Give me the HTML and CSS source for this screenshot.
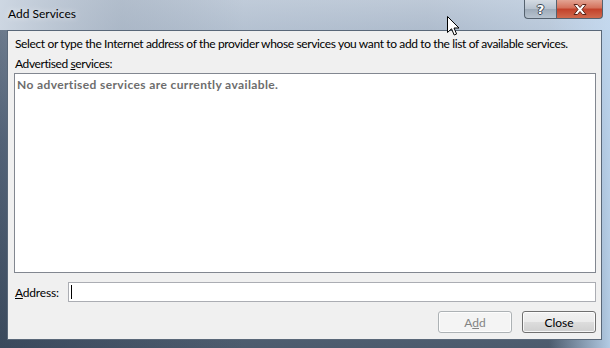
FILE: index.html
```html
<!DOCTYPE html>
<html lang="en">
<head>
    <meta charset="UTF-8">
    <title>Add Services</title>
    <link rel="stylesheet" href="styles.css">
</head>
<body>
    <div class="window">
        <div class="titlebar">
            <span class="title">Add Services</span>
            <div class="caption-buttons">
                <span class="caption-help">?</span>
                <span class="caption-close">
                    <svg width="14" height="11" viewBox="0 0 14 11">
                        <path d="M1 0.5 H4.5 L7 3.5 L9.5 0.5 H13 L9 5.5 L13 10.5 H9.5 L7 7.5 L4.5 10.5 H1 L5 5.5 Z" fill="#fff" stroke="#5a2418" stroke-width="1"/>
                    </svg>
                </span>
            </div>
        </div>
        <div class="client">
            <p class="intro">Select or type the Internet address of the provider whose services you want to add to the list of available services.</p>
            <div class="field-label">Advertised <u>s</u>ervices:</div>
            <div class="service-list">
                <div class="empty">No advertised services are currently available.</div>
            </div>
            <div class="address-row">
                <span class="address-label"><u>A</u>ddress:</span>
                <div class="address-input"><span class="caret"></span></div>
            </div>
            <div class="button-row">
                <button class="btn" disabled>A<u>d</u>d</button>
                <button class="btn">Close</button>
            </div>
        </div>
        <svg class="pointer" width="13" height="20" viewBox="0 0 13 20">
            <path d="M0.5 0.5 V16.5 L4.5 12.8 L7.2 19 L9.6 18 L7 12 H12 Z" fill="#fff" stroke="#000" stroke-width="1" stroke-linejoin="round"/>
        </svg>
    </div>
</body>
</html>
```

FILE: styles.css
```css
body {
    margin: 0;
    font-family: Lato, "Noto Sans", sans-serif;
    font-size: 12px;
    color: #000;
}

.window {
    position: relative;
    width: 610px;
    height: 348px;
    box-sizing: border-box;
    display: flex;
    flex-direction: column;
    padding: 0 8px 8px 7px;
    background:
        linear-gradient(90deg, rgba(40, 55, 75, 0.5) 0, rgba(40, 55, 75, 0) 40%, rgba(190, 215, 240, 0) 90%, rgba(190, 215, 240, 0.9) 100%),
        linear-gradient(180deg, #c6d0dc 0, #a9b7c8 40px, #7e8ea3 140px, #4c5b6d 348px);
    overflow: hidden;
}

.titlebar {
    height: 30px;
    flex: none;
    display: flex;
    align-items: flex-start;
    justify-content: space-between;
    background: linear-gradient(90deg, rgba(215, 224, 235, 0.9) 0, rgba(190, 202, 217, 0.6) 20%, rgba(170, 185, 205, 0.3) 70%, rgba(200, 218, 238, 0.6) 100%);
    margin: 0 -8px 0 -7px;
    padding: 0 7px 0 8px;
}

.title {
    line-height: 14px;
    margin-top: 7px;
    color: #000;
    text-shadow: 0 0 6px rgba(255, 255, 255, 0.9);
}

.caption-buttons {
    display: flex;
}

.caption-help,
.caption-close {
    height: 19px;
    display: flex;
    align-items: center;
    justify-content: center;
    border: 1px solid #55626f;
    border-top: none;
    box-sizing: border-box;
}

.caption-help {
    width: 32px;
    border-radius: 0 0 0 4px;
    border-right: none;
    background: linear-gradient(180deg, #d4dbe3 0, #b6c1cd 50%, #9eabb9 51%, #b7c3cf 100%);
    color: #fff;
    font-family: "DejaVu Sans", sans-serif;
    font-weight: bold;
    font-size: 13px;
    text-shadow: 1px 0 0 #3b4653, -1px 0 0 #3b4653, 0 1px 0 #3b4653, 0 -1px 0 #3b4653;
}

.caption-close {
    width: 47px;
    border-radius: 0 0 4px 0;
    background: linear-gradient(180deg, #e3a493 0, #d4705a 45%, #c2412a 50%, #d06a4e 100%);
}

.client {
    flex: 1;
    display: flex;
    flex-direction: column;
    background: #f0f0f0;
    border: 1px solid #5a6879;
    padding: 5px 5px 0 6px;
}

.intro {
    margin: 0 0 0 1px;
    line-height: 16px;
    white-space: nowrap;
    letter-spacing: -0.37px;
}

.field-label {
    margin: 4px 0 0 1px;
    line-height: 16px;
    letter-spacing: -0.4px;
}

.service-list {
    height: 200px;
    flex: none;
    box-sizing: border-box;
    margin-top: 1px;
    background: #fff;
    border: 1px solid #828790;
    padding: 3px 2px;
}

.empty {
    font-weight: bold;
    color: #6d6d6d;
    line-height: 16px;
    letter-spacing: 0.38px;
}

.address-row {
    display: flex;
    align-items: center;
    margin-top: 9px;
}

.address-label {
    width: 53px;
    padding-left: 1px;
    letter-spacing: -0.2px;
}

.address-input {
    flex: 1;
    height: 20px;
    box-sizing: border-box;
    background: #fff;
    border: 1px solid #abadb3;
    display: flex;
    align-items: center;
    padding-left: 2px;
}

.caret {
    width: 1px;
    height: 14px;
    background: #000;
}

.button-row {
    display: flex;
    justify-content: flex-end;
    gap: 10px;
    margin-top: 9px;
}

.btn {
    width: 74px;
    height: 22px;
    font-family: inherit;
    font-size: 12px;
    color: #000;
    border: 1px solid #707070;
    border-radius: 3px;
    background: linear-gradient(180deg, #f2f2f2 0, #ebebeb 50%, #dddddd 51%, #cfcfcf 100%);
    box-shadow: inset 0 0 0 1px rgba(255, 255, 255, 0.8);
    padding: 0;
}

.btn:disabled {
    color: #838383;
    border-color: #adb2b5;
    background: #f4f4f4;
}

.pointer {
    position: absolute;
    left: 447px;
    top: 16px;
}
```
